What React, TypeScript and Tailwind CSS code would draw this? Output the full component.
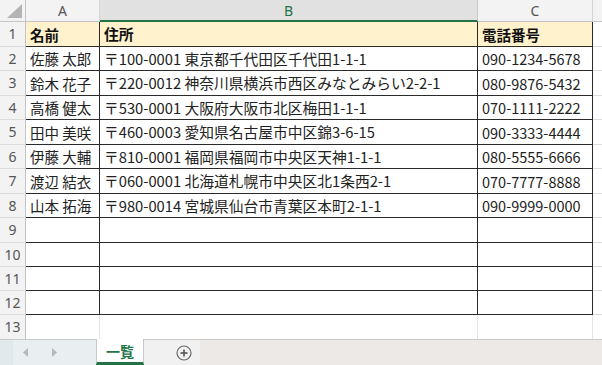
import React from "react";

const rows: [string, string, string][] = [
  ["名前", "住所", "電話番号"],
  ["佐藤 太郎", "〒100-0001 東京都千代田区千代田1-1-1", "090-1234-5678"],
  ["鈴木 花子", "〒220-0012 神奈川県横浜市西区みなとみらい2-2-1", "080-9876-5432"],
  ["高橋 健太", "〒530-0001 大阪府大阪市北区梅田1-1-1", "070-1111-2222"],
  ["田中 美咲", "〒460-0003 愛知県名古屋市中区錦3-6-15", "090-3333-4444"],
  ["伊藤 大輔", "〒810-0001 福岡県福岡市中央区天神1-1-1", "080-5555-6666"],
  ["渡辺 結衣", "〒060-0001 北海道札幌市中央区北1条西2-1", "070-7777-8888"],
  ["山本 拓海", "〒980-0014 宮城県仙台市青葉区本町2-1-1", "090-9999-0000"],
  ["", "", ""],
  ["", "", ""],
  ["", "", ""],
  ["", "", ""],
];

const font = { fontFamily: '"Noto Sans CJK JP", "Noto Sans", sans-serif' };

function RowHead({ n, last }: { n: number; last?: boolean }) {
  return (
    <div
      className={
        "flex items-center justify-center bg-[#f3f3f3] border-r border-[#c4c4c4] text-[14px] text-[#555] leading-none " +
        (last ? "" : "border-b border-b-[#dcdcdc]")
      }
      style={{ fontFamily: '"Noto Sans", "Open Sans", sans-serif' }}
    >
      {n}
    </div>
  );
}

export default function App() {
  return (
    <div className="w-[602px] h-[365px] overflow-hidden bg-white flex flex-col" style={font}>
      <div className="grid grid-cols-[26px_74px_378px_115px_1fr] grid-rows-[22px_25px_24px_25px_24px_25px_24px_25px_24px_25px_24px_24px_24px_24px] h-[339px]">
        {/* header row */}
        <div className="relative bg-[#f3f3f3] border-r border-b border-[#c4c4c4]">
          <svg className="absolute left-0 top-0" width="26" height="22" viewBox="0 0 26 22">
            <polygon points="7,18 22,18 22,4" fill="#b4b4b4" />
          </svg>
        </div>
        <div className="flex items-center justify-center bg-[#f3f3f3] border-r border-r-[#d4d4d4] border-b border-b-[#c4c4c4] text-[14px] text-[#555]" style={{ fontFamily: '"Noto Sans", sans-serif' }}>
          A
        </div>
        <div className="flex items-center justify-center bg-[#e1e1e1] border-r border-r-[#c8c8c8] border-b-2 border-b-[#217346] text-[14px] text-[#217346]" style={{ fontFamily: '"Noto Sans", sans-serif' }}>
          B
        </div>
        <div className="flex items-center justify-center bg-[#f3f3f3] border-r border-r-[#d4d4d4] border-b border-b-[#c4c4c4] text-[14px] text-[#555]" style={{ fontFamily: '"Noto Sans", sans-serif' }}>
          C
        </div>
        <div className="bg-[#f3f3f3] border-b border-b-[#c4c4c4]" />

        {rows.map((r, i) => {
          const head = i === 0;
          const cellBase =
            "flex items-center px-1 pt-[1px] whitespace-nowrap overflow-hidden border-r border-b border-[#2a2a2a] " +
            (head ? "bg-[#fff2cc] font-bold text-[#111]" : "bg-white text-[#222]");
          return (
            <React.Fragment key={i}>
              <RowHead n={i + 1} />
              <div className={cellBase + " text-[14.5px]"}>{r[0]}</div>
              <div className={cellBase + " text-[14.75px]"}>{r[1]}</div>
              <div className={cellBase + " text-[14.5px]"}>{r[2]}</div>
              <div className="border-b border-[#dedede]" />
            </React.Fragment>
          );
        })}

        {/* row 13 */}
        <RowHead n={13} last />
        <div className="border-r border-[#e4e4e4]" />
        <div className="border-r border-[#e4e4e4]" />
        <div className="border-r border-[#e4e4e4]" />
        <div />
      </div>

      {/* sheet tab bar */}
      <div className="flex h-[26px]">
        <div className="w-[96px] flex items-center bg-[#e9eef1] border-t border-[#c8c8c8]">
          <div className="w-[13px] h-full bg-[#e2e9ed]" />
          <svg className="ml-[10px]" width="6" height="9" viewBox="0 0 6 9">
            <polygon points="5,0 5,9 0,4.5" fill="#b8b8b8" />
          </svg>
          <svg className="ml-[22px]" width="6" height="9" viewBox="0 0 6 9">
            <polygon points="1,0 1,9 6,4.5" fill="#b8b8b8" />
          </svg>
        </div>
        <div className="w-[48px] flex items-center justify-center bg-white border-l border-r border-[#c8c8c8] border-b-[3px] border-b-[#217346] text-[14px] font-bold text-[#217346] pt-[1px]">
          一覧
        </div>
        <div className="w-[56px] flex items-center bg-[#f1f1f1] border-t border-[#c8c8c8]">
          <svg className="ml-[32px]" width="16" height="16" viewBox="0 0 16 16">
            <circle cx="8" cy="8" r="7" fill="none" stroke="#6a6a6a" strokeWidth="1.2" />
            <line x1="8" y1="4.5" x2="8" y2="11.5" stroke="#555" strokeWidth="1.6" />
            <line x1="4.5" y1="8" x2="11.5" y2="8" stroke="#555" strokeWidth="1.6" />
          </svg>
        </div>
        <div className="flex-1 bg-[#ece9e6] border-t border-[#c8c8c8]" />
      </div>
    </div>
  );
}
